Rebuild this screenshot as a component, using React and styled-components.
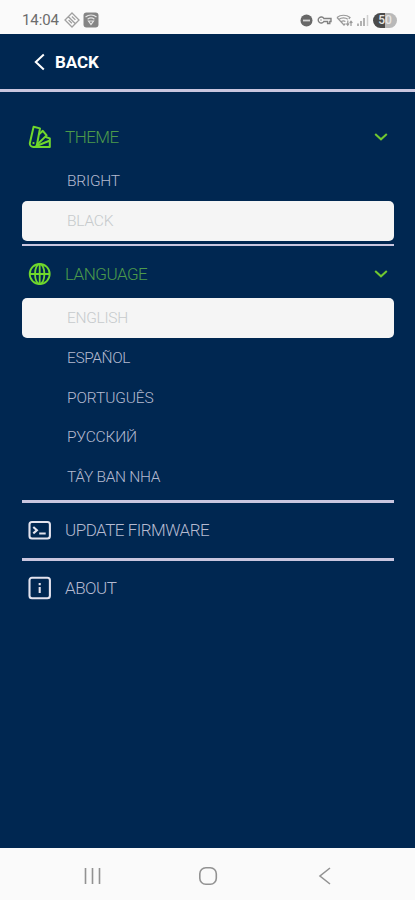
import React, { useState } from 'react';
import styled, { createGlobalStyle } from 'styled-components';

const GlobalStyle = createGlobalStyle`
  * {
    box-sizing: border-box;
  }

  body {
    margin: 0;
    background: #002751;
    font-family: Roboto, 'Liberation Sans', sans-serif;
  }
`;

const Screen = styled.div`
  display: flex;
  flex-direction: column;
  width: 100%;
  height: 100vh;
  background: #002751;
`;

const StatusBar = styled.div`
  display: flex;
  align-items: center;
  justify-content: space-between;
  height: 34px;
  padding: 6px 18px 0 22px;
  background: #fafafa;
  color: #6c6c6c;
`;

const StatusGroup = styled.div`
  display: flex;
  align-items: center;
  gap: ${(props) => props.$gap}px;
`;

const Clock = styled.span`
  width: 38px;
  margin-right: 1px;
  font-size: 15px;
  line-height: 18px;
  letter-spacing: -0.1px;
`;

const Battery = styled.div`
  display: flex;
  align-items: center;
  justify-content: center;
  width: 24px;
  height: 15px;
  border-radius: 8px;
  background: linear-gradient(90deg, #4b4b4b 50%, #b9b9b9 50%);
  color: #e6e6e6;
  font-size: 12px;
  font-weight: 500;
`;

const Header = styled.header`
  display: flex;
  align-items: center;
  height: 58px;
  padding: 0 0 0 33px;
  border-bottom: 3px solid #c9c6df;
`;

const BackButton = styled.button`
  display: flex;
  align-items: center;
  gap: 9px;
  padding: 0;
  border: none;
  background: none;
  color: #ffffff;
  font-family: inherit;
  font-size: 17px;
  font-weight: 700;
  letter-spacing: -0.1px;
  cursor: pointer;
`;

const Menu = styled.main`
  flex: 1;
  padding: 20px 21px 0 22px;
`;

const Section = styled.section`
  border-bottom: ${(props) => (props.$last ? 'none' : `${props.$line}px solid #c9c6df`)};
`;

const SectionHeader = styled.button`
  display: flex;
  align-items: center;
  width: 100%;
  height: ${(props) => props.$height}px;
  padding: ${(props) => props.$top || 0}px 6px ${(props) => props.$bottom || 0}px;
  border: none;
  background: none;
  color: ${(props) => (props.$open ? '#4d9b4b' : '#b5bad0')};
  font-family: inherit;
  font-size: 17px;
  font-weight: 300;
  letter-spacing: -0.5px;
  text-align: left;
  cursor: pointer;
`;

const SectionIcon = styled.span`
  display: flex;
  width: 24px;
  margin-right: 13px;
  color: ${(props) => (props.$open ? '#70d82c' : '#e3e3ee')};
`;

const SectionLabel = styled.span`
  flex: 1;
`;

const Options = styled.div`
  padding-bottom: ${(props) => props.$bottom}px;
`;

const Option = styled.button`
  display: flex;
  align-items: center;
  width: 100%;
  height: ${(props) => (props.$selected ? 40 : 39.7)}px;
  padding: 0 0 0 45px;
  border: none;
  border-radius: 5px;
  background: ${(props) => (props.$selected ? '#f5f5f5' : 'transparent')};
  color: ${(props) => (props.$selected ? '#c6cacc' : '#b5bad0')};
  font-family: inherit;
  font-size: 15.5px;
  font-weight: 300;
  letter-spacing: ${(props) => props.$spacing}px;
  cursor: pointer;
`;

const NavBar = styled.nav`
  display: flex;
  align-items: center;
  justify-content: space-between;
  height: 52px;
  padding: 4px 82px 0 83px;
  background: #fafafa;
  color: #929292;
`;

const SwatchIcon = () => (
  <svg width="24" height="24" viewBox="0 0 24 24" fill="none" stroke="currentColor" strokeWidth="2" strokeLinejoin="round">
    <path d="M5.6 1.8 12 3.4 9.2 18.5A3.7 3.7 0 0 1 1.8 18.2Z" />
    <path d="m10.8 9.4 4-3.6 3.8 4.6L8.4 20.2" />
    <path d="m17 11.8 4.8 1.6v8.6H5.2M9 20.8l12.4-5" />
    <path d="M5.4 18h.2" strokeLinecap="round" />
  </svg>
);

const GlobeIcon = () => (
  <svg width="24" height="24" viewBox="0 0 24 24" fill="none" stroke="currentColor" strokeWidth="1.8">
    <circle cx="11.7" cy="12" r="10" />
    <ellipse cx="11.7" cy="12" rx="4.7" ry="10" />
    <path d="M1.7 12h20M11.7 2v20" />
  </svg>
);

const TerminalIcon = () => (
  <svg width="24" height="24" viewBox="0 0 24 24" fill="none" stroke="currentColor" strokeWidth="2.1">
    <rect x="1.5" y="4" width="20.4" height="16.5" rx="2.5" />
    <path d="m5.3 9 3.6 3.2-3.6 3.2M11.2 15.5h6.5" />
  </svg>
);

const InfoIcon = () => (
  <svg width="24" height="24" viewBox="0 0 24 24" fill="none" stroke="currentColor" strokeWidth="2.1">
    <rect x="1.5" y="1.8" width="20.4" height="20.4" rx="2.5" />
    <path d="M11.7 7v2.2M11.7 11v6" />
  </svg>
);

const ChevronDown = () => (
  <svg width="14" height="10" viewBox="0 0 14 10" fill="none" stroke="#70c82f" strokeWidth="2">
    <path d="m1.2 2 5.8 5.3L12.8 2" />
  </svg>
);

const DiamondIcon = () => (
  <svg width="16" height="16" viewBox="0 0 16 16" fill="none" stroke="#a0a0a0" strokeWidth="1.3">
    <path d="m8 1 7 7-7 7-7-7ZM4.4 4.7l7 7M7.9 4.5l3.5 3.4M4.6 8l3.3 3.2" />
  </svg>
);

const WifiBadgeIcon = () => (
  <svg width="16" height="16" viewBox="0 0 16 16" fill="none">
    <rect x="0.5" y="0.5" width="15" height="15" rx="3" fill="#858585" />
    <path d="M2.5 5c3.2-2.4 7.8-2.4 11 0M4.6 7.2c2-1.5 4.8-1.5 6.8 0M5.5 9h5L8 12.5Z" stroke="#e6e6e6" strokeWidth="1.2" />
  </svg>
);

const DndIcon = () => (
  <svg width="13" height="13" viewBox="0 0 13 13">
    <circle cx="6.5" cy="6.5" r="6" fill="#686868" />
    <path d="M3 6.5h7" stroke="#d5d5d5" strokeWidth="1.8" />
  </svg>
);

const KeyIcon = () => (
  <svg width="15" height="10" viewBox="0 0 15 10" fill="none" stroke="#818181" strokeWidth="1.4">
    <path d="M6.8 3.5H14v3h-1.2v2h-2.2v-2H6.8A3 3 0 1 1 6.8 3.5Z" />
    <path d="M3.5 5h1" />
  </svg>
);

const WifiIcon = () => (
  <svg width="17" height="13" viewBox="0 0 17 13" fill="none" stroke="#999999" strokeWidth="1.2">
    <path d="M1 3.5c3.7-3 9.3-3 13 0L12.8 5M1 3.5l7 7.5 1.4-1.5M3 5.3c2.5-1.9 6.5-1.9 8.8 0M5.3 7.6c1.3-.9 2.8-.9 4.1 0" />
    <path d="M11.8 6.5V11m-1.4-1.5 1.4 1.7 1.3-1.7M15 12V7.5m-1.3 1.4L15 7.3l1.4 1.6" />
  </svg>
);

const SignalIcon = () => (
  <svg width="12" height="12" viewBox="0 0 12 12" strokeWidth="1.5" stroke="#9a9a9a">
    <path d="M1 12V9.5M4 12V7M7 12V4" />
    <path d="M10.5 12V1" stroke="#cfcfcf" />
  </svg>
);

const languages = [
  { name: 'ENGLISH', spacing: -0.3 },
  { name: 'ESPAÑOL', spacing: -0.4 },
  { name: 'PORTUGUÊS', spacing: -0.1 },
  { name: 'РУССКИЙ', spacing: -0.2 },
  { name: 'TÂY BAN NHA', spacing: -0.3 },
];

const App = () => {
  const [theme, setTheme] = useState('BLACK');
  const [language, setLanguage] = useState('ENGLISH');
  const [openTheme, setOpenTheme] = useState(true);
  const [openLanguage, setOpenLanguage] = useState(true);

  return (
    <Screen>
      <GlobalStyle />
      <StatusBar>
        <StatusGroup $gap={3}>
          <Clock>14:04</Clock>
          <DiamondIcon />
          <WifiBadgeIcon />
        </StatusGroup>
        <StatusGroup $gap={4}>
          <DndIcon />
          <KeyIcon />
          <WifiIcon />
          <SignalIcon />
          <Battery>50</Battery>
        </StatusGroup>
      </StatusBar>

      <Header>
        <BackButton>
          <svg width="13" height="18" viewBox="0 0 13 18" fill="none" stroke="currentColor" strokeWidth="2">
            <path d="M10.8 1.5 2.8 9l8 7.5" />
          </svg>
          BACK
        </BackButton>
      </Header>

      <Menu>
        <Section $line={2}>
          <SectionHeader
            $height={49}
            $top={1}
            $open={openTheme}
            onClick={() => setOpenTheme(!openTheme)}
          >
            <SectionIcon $open={openTheme}><SwatchIcon /></SectionIcon>
            <SectionLabel>THEME</SectionLabel>
            <ChevronDown />
          </SectionHeader>
          {openTheme && (
            <Options $bottom={3.7}>
              {['BRIGHT', 'BLACK'].map((name) => (
                <Option
                  key={name}
                  $selected={theme === name}
                  $spacing={-0.2}
                  onClick={() => setTheme(name)}
                >
                  {name}
                </Option>
              ))}
            </Options>
          )}
        </Section>

        <Section $line={3}>
          <SectionHeader
            $height={51.6}
            $top={3}
            $open={openLanguage}
            onClick={() => setOpenLanguage(!openLanguage)}
          >
            <SectionIcon $open={openLanguage}><GlobeIcon /></SectionIcon>
            <SectionLabel>LANGUAGE</SectionLabel>
            <ChevronDown />
          </SectionHeader>
          {openLanguage && (
            <Options $bottom={3.2}>
              {languages.map(({ name, spacing }) => (
                <Option
                  key={name}
                  $selected={language === name}
                  $spacing={spacing}
                  onClick={() => setLanguage(name)}
                >
                  {name}
                </Option>
              ))}
            </Options>
          )}
        </Section>

        <Section $line={3}>
          <SectionHeader $height={55} $bottom={1}>
            <SectionIcon><TerminalIcon /></SectionIcon>
            <SectionLabel>UPDATE FIRMWARE</SectionLabel>
          </SectionHeader>
        </Section>

        <Section $last>
          <SectionHeader $height={55} $bottom={1}>
            <SectionIcon><InfoIcon /></SectionIcon>
            <SectionLabel>ABOUT</SectionLabel>
          </SectionHeader>
        </Section>
      </Menu>

      <NavBar>
        <svg width="19" height="18" viewBox="0 0 19 18" stroke="currentColor" strokeWidth="1.6">
          <path d="M2.5 1v16M9.5 1v16M16.5 1v16" />
        </svg>
        <svg width="20" height="20" viewBox="0 0 20 20" fill="none" stroke="currentColor" strokeWidth="1.6">
          <rect x="0.8" y="1.8" width="16.5" height="16.5" rx="6" />
        </svg>
        <svg width="17" height="20" viewBox="0 0 17 20" fill="none" stroke="currentColor" strokeWidth="1.6">
          <path d="M14 2 4 10l10 8" />
        </svg>
      </NavBar>
    </Screen>
  );
};

export default App;
